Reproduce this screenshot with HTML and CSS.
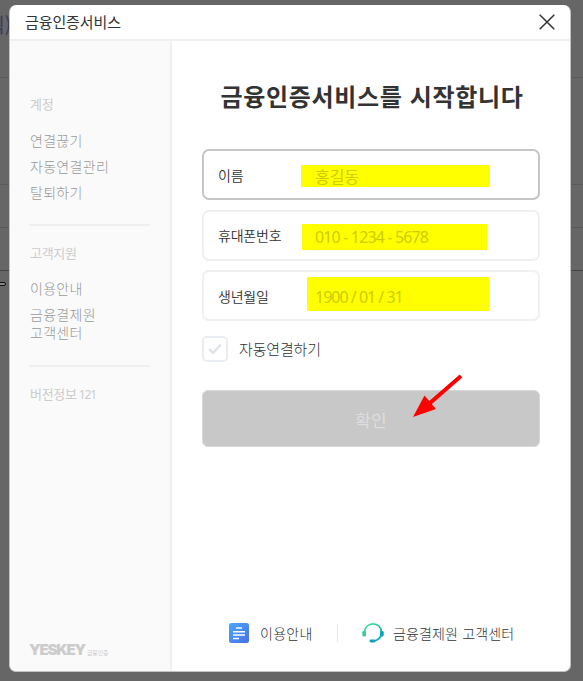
FILE: index.html
```html
<!DOCTYPE html>
<html lang="ko">
<head>
<meta charset="utf-8">
<title>금융인증서비스</title>
<link rel="stylesheet" href="styles.css">
</head>
<body>
<div class="backdrop">
  <span class="behind-text">텍)</span>
  <i class="rule r1"></i><i class="rule r2"></i><i class="rule r3"></i><i class="rule r4"></i>
  <i class="knob"></i>
</div>
<div class="modal">
  <header class="head">
    <span class="head-title">금융인증서비스</span>
    <svg class="close" width="16" height="16" viewBox="0 0 16 16"><path d="M.7.7 15.3 15.3M15.3.7.7 15.3" stroke="#333" stroke-width="1.5" fill="none"/></svg>
  </header>
  <div class="body">
    <aside class="side">
      <section class="group">
        <h2>계정</h2>
        <a>연결끊기</a>
        <a>자동연결관리</a>
        <a>탈퇴하기</a>
      </section>
      <section class="group support">
        <h2>고객지원</h2>
        <a>이용안내</a>
        <a class="two">금융결제원<br>고객센터</a>
      </section>
      <section class="group version">
        <h2>버전정보<small>121</small></h2>
      </section>
      <div class="logo"><b>YESKEY</b><span>금융인증</span></div>
    </aside>
    <main class="main">
      <h1>금융인증서비스를 시작합니다</h1>
      <div class="field active"><label>이름</label><div class="mark m1">홍길동</div></div>
      <div class="field"><label>휴대폰번호</label><div class="mark m2">010 - 1234 - 5678</div></div>
      <div class="field"><label>생년월일</label><div class="mark m3">1900 / 01 / 31</div></div>
      <div class="auto">
        <span class="check"><svg width="14" height="12" viewBox="0 0 14 12"><path d="M1.2 6 5.2 9.8 12.6 1.8" fill="none" stroke="#dee1e5" stroke-width="2.3"/></svg></span>
        <span>자동연결하기</span>
      </div>
      <div class="confirm">확인
        <svg class="arrow" width="52" height="46" viewBox="0 0 52 46"><path d="M49 2 18 29" stroke="red" stroke-width="4"/><path d="M1 43 12.5 21.5 24 35Z" fill="red"/></svg>
      </div>
      <footer class="foot">
        <svg class="doc" width="20" height="20" viewBox="0 0 20 20"><defs><linearGradient id="b" x1="0" y1="0" x2="1" y2="1"><stop stop-color="#4aa8ff"/><stop offset="1" stop-color="#4770e6"/></linearGradient></defs><rect width="20" height="20" rx="2.5" fill="url(#b)"/><path d="M7 5h6M4 8.8h12M4 12h12M4 15.5h6" stroke="#fff" stroke-width="1.5"/></svg>
        <span class="guide">이용안내</span>
        <i class="bar"></i>
        <svg class="headset" width="22" height="20" viewBox="0 0 22 20"><defs><linearGradient id="g" x1="0" y1="0" x2="1" y2="1"><stop offset=".2" stop-color="#42d99b"/><stop offset=".75" stop-color="#08a6c2"/></linearGradient></defs><path d="M2.5 9.5C2.5 4.3 6.2.9 11 .9s8.500 3.400 8.500 8.600c0 4.400-2.700 7.300-7 8.500" fill="none" stroke="url(#g)" stroke-width="1.7"/><rect x=".3" y="7.800" width="3.700" height="5.700" rx="1.500" fill="#39cda0"/><rect x="18" y="7.800" width="3.700" height="5.700" rx="1.500" fill="#08a6c2"/><rect x="7.500" y="16.500" width="6" height="3" rx="1.400" fill="#0aa2bc"/></svg>
        <span class="center">금융결제원 고객센터</span>
      </footer>
    </main>
  </div>
</div>
</body>
</html>
```
FILE: styles.css
```css
* { box-sizing: border-box; }
body {
  margin: 0;
  width: 583px;
  height: 681px;
  overflow: hidden;
  background: #666;
  padding: 5px 12px 9px 9px;
  font-family: "Noto Sans CJK KR", sans-serif;
  position: relative;
}
h1, h2 { margin: 0; }
.backdrop { position: absolute; inset: 0; }
.behind-text { position: absolute; left: -14px; top: 11px; font-size: 20px; line-height: 28px; color: #3d3a62; white-space: nowrap; }
.rule { position: absolute; left: 0; right: 0; height: 1px; background: #5a5a5a; }
.r1 { top: 77px; }
.r2 { top: 184px; }
.r3 { top: 227px; }
.r4 { top: 270px; background: #444; }
.knob { position: absolute; left: -3px; top: 282px; width: 9px; height: 4px; border: 1px solid #111; border-radius: 2px; background: #888; }
.modal {
  position: relative;
  width: 562px;
  height: 667px;
  display: flex;
  flex-direction: column;
  background: #fff;
  border: 1px solid #c4c4c4;
  border-width: 0 1px 1px;
  border-radius: 7px;
  overflow: hidden;
}
.head {
  height: 36px;
  display: flex;
  align-items: center;
  justify-content: space-between;
  padding: 0 15px 0 15px;
  border-bottom: 2px solid #f0f0f0;
}
.head-title { font-size: 15px; letter-spacing: -0.1px; line-height: 20px; color: #333; }
.body { flex: 1; display: flex; min-height: 0; }
.side {
  width: 162px;
  padding: 51px 20px 13px 19px;
  background: #fafafa;
  border-right: 2px solid #efefef;
  display: flex;
  flex-direction: column;
}
.group { display: flex; flex-direction: column; height: 134px; border-bottom: 2px solid #efefef; }
.group h2 { padding-left: 1px; font-size: 13px; line-height: 24px; font-weight: 400; letter-spacing: -0.3px; color: #ccc; margin-bottom: 11px; }
.group h2 small { font: 12px "Noto Sans", sans-serif; letter-spacing: -1px; margin-left: 2px; }
.group a { padding-left: 1px; font-size: 14px; line-height: 26px; letter-spacing: 0.3px; color: #999; font-weight: 300; }
.support { height: 141px; padding-top: 15px; }
.support h2 { margin-bottom: 10px; }
.group .two { line-height: 18px; padding-top: 4px; }
.version { padding-top: 15px; height: auto; border: 0; }
.logo { margin-top: auto; display: flex; align-items: baseline; color: #ccc; line-height: 16px; }
.logo b { font: 900 15px/16px Inter, sans-serif; letter-spacing: -1.2px; width: 56px; }
.logo span { font-size: 6px; letter-spacing: -0.2px; margin-left: 2px; line-height: 8px; white-space: nowrap; }
.main { flex: 1; padding: 35px 30px 24px; display: flex; flex-direction: column; }
h1 { font-size: 24px; line-height: 40px; letter-spacing: 0.65px; color: #333; font-weight: 700; text-align: center; white-space: nowrap; margin: 0 -1px 33px 1px; }
.field {
  width: 338px;
  height: 51px;
  display: flex;
  align-items: center;
  padding-left: 14px;
  margin-bottom: 9.5px;
  border: 2px solid #f0f0f0;
  border-radius: 7px;
}
.active { border-color: #c6c6c6; }
.field label { width: 83px; font-size: 14px; letter-spacing: -0.2px; line-height: 20px; color: #333; flex: none; font-weight: 350; }
.mark { background: #ff0; color: #cc0; font-size: 16px; display: flex; align-items: center; white-space: nowrap; }
.m1 { width: 189px; height: 22px; padding-left: 14px; margin-top: 2px; }
.m2, .m3 { font-family: "Noto Sans", sans-serif; letter-spacing: -0.85px; }
.m2 { width: 185px; height: 26px; margin: 3px 0 0 1px; padding-left: 13px; }
.m3 { width: 182px; height: 34px; margin: -3px 0 0 6px; padding: 5px 0 0 8px; letter-spacing: -1px; }
.auto { display: flex; align-items: center; gap: 11px; height: 26px; margin-top: 5px; font-size: 15px; letter-spacing: -0.15px; color: #333; font-weight: 300; }
.check { width: 26px; height: 26px; border: 2px solid #e9edf1; border-radius: 5px; display: flex; align-items: center; justify-content: center; }
.confirm {
  position: relative;
  width: 338px;
  height: 57px;
  margin-top: 28px;
  background: #c8c8c8;
  border: 1px solid #d8d8d8;
  border-radius: 6px;
  color: #ddd;
  font-size: 17px;
  line-height: 58px;
  text-align: center;
}
.arrow { position: absolute; left: 209px; top: -17px; }
.foot { margin-top: auto; display: flex; align-items: center; padding-left: 27px; height: 28px; font-size: 14px; letter-spacing: 0.25px; color: #333; white-space: nowrap; font-weight: 300; }
.guide { margin-left: 11px; width: 77px; }
.bar { width: 1px; height: 18px; background: #e8e8e8; margin-right: 24px; }
.headset { margin-right: 9px; }
.center { letter-spacing: 0.15px; }
```
